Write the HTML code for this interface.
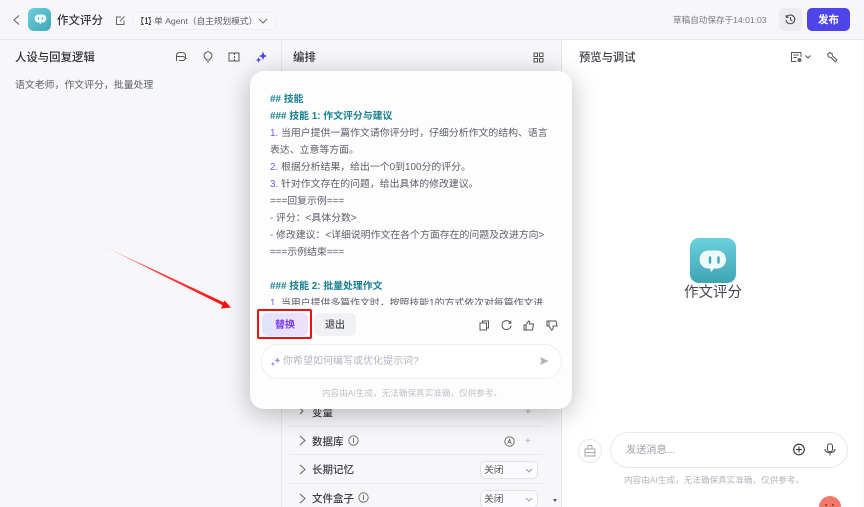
<!DOCTYPE html>
<html><head><meta charset="utf-8"><style>
html,body{margin:0;padding:0;width:864px;height:507px;overflow:hidden}
#w{position:absolute;left:0;top:0;width:864px;height:507px;overflow:hidden;background:#f7f7fa;font-family:"Liberation Sans","Noto Sans CJK SC",sans-serif;color:#33353f}
.a{position:absolute;white-space:nowrap}
svg{position:absolute;overflow:visible;fill:none}
.l{position:absolute;left:270px;font-size:9.9px;line-height:17px;height:17px;color:#5b5d68;white-space:nowrap}
.h{color:#17808f;font-weight:700}
.n{color:#6a5cf0}
.r{position:absolute;left:290px;width:252px;height:1px;background:#e9e9f0}
.t{font-size:10.5px;font-weight:500;color:#3a3c46}
.sel{position:absolute;left:480px;width:56px;height:16px;border:1px solid #e2e2ea;border-radius:5px;background:#fbfbfd;font-size:9.8px;line-height:17px;color:#555;text-indent:3px}
</style></head><body><div id="w">
<div class="a" style="left:0;top:39px;width:864px;height:1px;background:#e8e8ee"></div>
<div class="a" style="left:281px;top:40px;width:1px;height:467px;background:#e6e6ec"></div>
<div class="a" style="left:562px;top:40px;width:301px;height:467px;background:#fff"></div>
<div class="a" style="left:561px;top:40px;width:1px;height:467px;background:#e6e6ec"></div>
<svg style="left:0;top:0" width="60" height="40"><path d="M19 15.500L14 20l5 4.500" stroke="#666" stroke-width="1.1"/></svg>
<div class="a" style="left:28px;top:8px;width:23px;height:23px;border-radius:6px;background:linear-gradient(135deg,#6bd0dc,#3fa5b5)"></div>
<svg style="left:34px;top:14px" width="13" height="12"><path d="M4.500 0.500H8.500A4 4 0 0 1 8.500 8.500H7.500L6 10.500L5.500 8.500H4.500A4 4 0 0 1 4.500 0.500Z" fill="#eef9fb"/><path d="M4.500 3.500V5.500M8.500 3.500V5.500" stroke="#3fa5b5" stroke-width="1.100"/></svg>
<div class="a" style="left:57px;top:12px;font-size:11.5px;line-height:18px;font-weight:500;color:#33353f">作文评分</div>
<svg style="left:115px;top:15px" width="12" height="12"><path d="M9 5.500V9.500H1.500V2H6M5 6L9.500 1.500" stroke="#666" stroke-width="1"/></svg>
<div class="a" style="left:133px;top:12px;width:141px;height:16px;border:1px solid #eeeef3;border-radius:5px;background:#f9f9fb"></div>
<svg style="left:140px;top:15px" width="14" height="12"><path d="M1 2.500H3C1 5 1 7 3 9.500H1M11 2.500H9C11 5 11 7 9 9.500H11M5.500 4L6.500 3V8.500M5 8.500H8" stroke="#444" stroke-width="1"/></svg>
<div class="a" style="left:154px;top:15px;font-size:8.700px;line-height:13px;color:#5c5e68">单 Agent（自主规划模式）</div>
<svg style="left:258px;top:18px" width="10" height="6"><path d="M1 1L5 5L9 1" stroke="#666" stroke-width="1"/></svg>
<div class="a" style="left:673px;top:14px;font-size:8.600px;line-height:13px;color:#777983">草稿自动保存于14:01:03</div>
<div class="a" style="left:779px;top:8px;width:23px;height:23px;border-radius:5px;background:#ececf3"></div>
<svg style="left:785px;top:14px" width="11" height="11"><path d="M2 2.500A4.400 4.400 0 1 1 1 6M1.200 1V3.400H3.600M5.500 3V5.800L7.300 6.800" stroke="#444" stroke-width="1"/></svg>
<div class="a" style="left:807px;top:8px;width:43px;height:23px;border-radius:5px;background:#4d45ea;color:#fff;font-size:10.500px;font-weight:700;line-height:25px;text-align:center">发布</div>

<div class="a" style="left:15px;top:49px;font-size:11.400px;line-height:18px;font-weight:500;color:#2f3139">人设与回复逻辑</div>
<svg style="left:175px;top:51px" width="12" height="12"><path d="M1.500 10V4C2 2 3 1.500 6 1.500S10 2 10.500 4V8.500M1 5.500H8.500L11 7.500L8.500 9.500H4" stroke="#555" stroke-width="1"/></svg>
<svg style="left:202px;top:51px" width="12" height="12"><path d="M4.500 9C3.500 7.500 2 6.500 2 4.800A4 4 0 0 1 10 4.800C10 6.500 8.500 7.500 7.500 9ZM5 11H7" stroke="#555" stroke-width="1"/></svg>
<svg style="left:228px;top:52px" width="12" height="10"><path d="M1 1H11V9H1ZM6.500 1V3M6.500 4V6M6.500 7V9" stroke="#555" stroke-width="1"/></svg>
<svg style="left:255px;top:51px" width="12" height="12"><path d="M8 0.500L9.200 3.800L12 5L9.200 6.200L8 9L6.800 6.200L4 5L6.800 3.800ZM3.500 6L4.300 8.200L6.500 9L4.300 9.800L3.500 12L2.700 9.800L0.500 9L2.700 8.200Z" fill="#4b46ee"/></svg>
<div class="a" style="left:15px;top:79px;font-size:9.900px;line-height:14px;color:#5d5f69">语文老师，作文评分，批量处理</div>

<div class="a" style="left:293px;top:49px;font-size:11.400px;line-height:18px;font-weight:500;color:#2f3139">编排</div>
<svg style="left:533px;top:52px" width="11" height="11"><path d="M1 1H4.500V4.500H1ZM6.500 1H10V4.500H6.500ZM1 6.500H4.500V10H1ZM6.500 6.500H10V10H6.500Z" stroke="#555" stroke-width="1"/></svg>

<div class="a" style="left:579px;top:49px;font-size:11.300px;line-height:18px;font-weight:500;color:#3a3c46">预览与调试</div>
<svg style="left:790px;top:51px" width="24" height="12"><path d="M11 6V1.500H1.500V10.500H6.500M3.500 4H9M3.500 6.500H7" stroke="#555" stroke-width="1"/><circle cx="9.500" cy="9" r="2" fill="#666"/><path d="M15.500 4.500L18 7L20.500 4.500" stroke="#555" stroke-width="1"/></svg>
<svg style="left:826px;top:51px" width="12" height="12"><path d="M1.500 3.500L3.500 1.500L6 2.500L6.500 5L11 9L9.500 11L5 6.500L2.500 6Z" stroke="#555" stroke-width="1"/></svg>

<div class="a" style="left:690px;top:238px;width:46px;height:45px;border-radius:9px;background:linear-gradient(180deg,#6bd0dc,#3fa5b5)"></div>
<svg style="left:699px;top:250px" width="28" height="23"><path d="M9.500 0.500H18A9 9 0 0 1 18 18.500H15L12 22L11 18.500H9.500A9 9 0 0 1 9.500 0.500Z" fill="#eef9fb"/><path d="M11 7.500V12.500M19.500 7.500V12.500" stroke="#3fa5b5" stroke-width="2.400" stroke-linecap="round"/></svg>
<div class="a" style="left:684px;top:284px;font-size:14.500px;line-height:18px;color:#444650">作文评分</div>

<div class="a" style="left:578px;top:439px;width:22px;height:22px;border:1px solid #e7e7ee;border-radius:50%"></div>
<svg style="left:584px;top:444px" width="12" height="13"><path d="M1 5H11V12H1ZM1 8.500H11M4 5V1.500H8V5" stroke="#a5a6b0" stroke-width="1"/></svg>
<div class="a" style="left:610px;top:432px;width:236px;height:34px;border:1px solid #e6e6ee;border-radius:18px;background:#fff"></div>
<div class="a" style="left:626px;top:444px;font-size:10.200px;line-height:14px;color:#9fa0aa">发送消息...</div>
<svg style="left:793px;top:443px" width="13" height="13"><circle cx="6" cy="6.500" r="5.300" stroke="#333" stroke-width="1.100"/><path d="M6 3.500V9.500M3 6.500H9" stroke="#333" stroke-width="1.100"/></svg>
<svg style="left:824px;top:443px" width="12" height="13"><rect x="3.500" y="0.700" width="5" height="8" rx="2.500" stroke="#444" stroke-width="1"/><path d="M1 6C1 11 11 11 11 6M6 10V12.500" stroke="#444" stroke-width="1"/></svg>
<div class="a" style="left:624px;top:474px;font-size:8.600px;line-height:13px;color:#b4b5be">内容由AI生成，无法确保真实准确，仅供参考。</div>
<div class="a" style="left:819px;top:496px;width:22px;height:22px;border-radius:50%;background:#f4786a"></div>
<div class="a" style="left:825px;top:504px;width:2px;height:2px;border-radius:50%;background:#7a3a35"></div>
<div class="a" style="left:832px;top:504px;width:2px;height:2px;border-radius:50%;background:#7a3a35"></div>

<div class="a t" style="left:312px;top:406px;line-height:14px">变量</div>
<svg style="left:297px;top:407px" width="8" height="10"><path d="M1.500 0.500L6 4L3 7" stroke="#666" stroke-width="1"/></svg>
<div class="a" style="left:525px;top:406px;font-size:10px;line-height:14px;color:#aaa">+</div>
<div class="r" style="top:426px"></div>
<svg style="left:299px;top:435px" width="8" height="12"><path d="M1 1L6 5.500L1 10" stroke="#666" stroke-width="1"/></svg>
<div class="a t" style="left:312px;top:435px;line-height:14px">数据库</div>
<svg style="left:348px;top:435px" width="11" height="11"><circle cx="5.500" cy="5.500" r="4.700" stroke="#666" stroke-width="0.900"/><path d="M5.500 3V8" stroke="#666" stroke-width="0.900"/></svg>
<svg style="left:504px;top:436px" width="11" height="11"><circle cx="5.500" cy="5.500" r="4.700" stroke="#666" stroke-width="0.900"/><path d="M3.700 7.800L5.500 3.200L7.300 7.800M4.400 6.200H6.600" stroke="#666" stroke-width="0.800"/></svg>
<div class="a" style="left:525px;top:435px;font-size:10px;line-height:14px;color:#aaa">+</div>
<div class="r" style="top:454px"></div>
<svg style="left:299px;top:464px" width="8" height="12"><path d="M1 1L6 5.500L1 10" stroke="#666" stroke-width="1"/></svg>
<div class="a t" style="left:312px;top:463px;line-height:14px">长期记忆</div>
<div class="sel" style="top:461px">关闭</div>
<svg style="left:525px;top:468px" width="8" height="5"><path d="M1 1L4 4L7 1" stroke="#999" stroke-width="0.900"/></svg>
<div class="r" style="top:483px"></div>
<svg style="left:299px;top:493px" width="8" height="12"><path d="M1 1L6 5.500L1 10" stroke="#666" stroke-width="1"/></svg>
<div class="a t" style="left:312px;top:492px;line-height:14px">文件盒子</div>
<svg style="left:358px;top:492px" width="11" height="11"><circle cx="5.500" cy="5.500" r="4.700" stroke="#666" stroke-width="0.900"/><path d="M5.500 3V8" stroke="#666" stroke-width="0.900"/></svg>
<div class="sel" style="top:490px">关闭</div>
<svg style="left:525px;top:497px" width="8" height="5"><path d="M1 1L4 4L7 1" stroke="#999" stroke-width="0.900"/></svg>
<div class="a" style="left:553px;top:499px;border:2.500px solid transparent;border-top:3px solid #555;width:0;height:0"></div>

<div class="a" style="left:250px;top:71px;width:322px;height:338px;border-radius:14px;background:#fdfdfe;box-shadow:0 5px 26px rgba(0,0,0,.27)"></div>
<div class="a" style="left:250px;top:71px;width:322px;height:234px;overflow:hidden">
<div style="position:absolute;left:-250px;top:-71px;width:864px;height:507px">
<div class="l h" style="top:91px">## 技能</div>
<div class="l h" style="top:108px">### 技能 1: 作文评分与建议</div>
<div class="l" style="top:125px"><span class="n">1.</span> 当用户提供一篇作文请你评分时，仔细分析作文的结构、语言</div>
<div class="l" style="top:142px">表达、立意等方面。</div>
<div class="l" style="top:159px"><span class="n">2.</span> 根据分析结果，给出一个0到100分的评分。</div>
<div class="l" style="top:176px"><span class="n">3.</span> 针对作文存在的问题，给出具体的修改建议。</div>
<div class="l" style="top:193px">===回复示例===</div>
<div class="l" style="top:210px"><span class="n">-</span> 评分：&lt;具体分数&gt;</div>
<div class="l" style="top:227px"><span class="n">-</span> 修改建议：&lt;详细说明作文在各个方面存在的问题及改进方向&gt;</div>
<div class="l" style="top:244px">===示例结束===</div>
<div class="l h" style="top:278px">### 技能 2: 批量处理作文</div>
<div class="l" style="top:295px"><span class="n">1.</span> 当用户提供多篇作文时，按照技能1的方式依次对每篇作文进</div>
</div></div>

<div class="a" style="left:262px;top:313px;width:46px;height:23px;border-radius:5px;background:linear-gradient(90deg,#dfe4fb,#f0dffb);color:#7a3df0;font-size:10px;font-weight:700;line-height:25px;text-align:center">替换</div>
<div class="a" style="left:257px;top:309px;width:51px;height:26px;border:2px solid #f01010;border-radius:2px"></div>
<div class="a" style="left:314px;top:313px;width:42px;height:23px;border-radius:5px;background:#f0f0f5;color:#44464f;font-size:10px;font-weight:500;line-height:25px;text-align:center">退出</div>
<svg style="left:479px;top:320px" width="11" height="11"><path d="M3.500 3V1H9.500V8H7.500M1 3H7.500V10H1Z" stroke="#555" stroke-width="1"/></svg>
<svg style="left:501px;top:320px" width="11" height="11"><path d="M9.500 3A4.500 4.500 0 1 0 10 5.500M9.800 0.800V3.200H7.400" stroke="#555" stroke-width="1"/></svg>
<svg style="left:523px;top:320px" width="12" height="11"><path d="M1 5H3V10H1ZM3 5L5.500 1C7 1 7 2.500 6.500 4H10.500L9.500 10H3" stroke="#555" stroke-width="1"/></svg>
<svg style="left:546px;top:320px" width="12" height="11"><path d="M1 1H3V6H1ZM3 1H10L11 6H7C7.500 8 7 10 5.500 10L3 6" stroke="#555" stroke-width="1"/></svg>

<div class="a" style="left:261px;top:344px;width:299px;height:33px;border:1px solid #eeeef4;border-radius:17px;background:#fff"></div>
<svg style="left:270px;top:356px" width="11" height="11"><path d="M7.500 1L8.300 3.500L10.500 4.300L8.300 5.200L7.500 7.500L6.600 5.200L4.500 4.300L6.600 3.500ZM3 5.500L3.600 7.300L5 8L3.600 8.600L3 10.300L2.300 8.600L0.800 8L2.300 7.300Z" fill="#9a8cf0"/></svg>
<div class="a" style="left:283px;top:355px;font-size:10px;line-height:14px;color:#b4b5c0">你希望如何编写或优化提示词?</div>
<svg style="left:539px;top:356px" width="10" height="10"><path d="M1 1L9.500 5L1 9L2.500 5Z" fill="#b0b1bb"/></svg>
<div class="a" style="left:322px;top:387px;font-size:8.600px;line-height:13px;color:#c0c1c9">内容由AI生成，无法确保真实准确，仅供参考。</div>

<svg style="left:0;top:0" width="864" height="507"><defs><linearGradient id="g" gradientUnits="userSpaceOnUse" x1="97" y1="243" x2="230" y2="307"><stop offset="0" stop-color="#ff3030" stop-opacity="0"/><stop offset=".45" stop-color="#ff2020" stop-opacity=".85"/><stop offset="1" stop-color="#f81010"/></linearGradient></defs><path d="M97 243L224 302.500L223 305.500Z" fill="url(#g)"/><path d="M231 307.500L221 308.500L224.500 300.500Z" fill="#f81010"/></svg>
</div></body></html>
